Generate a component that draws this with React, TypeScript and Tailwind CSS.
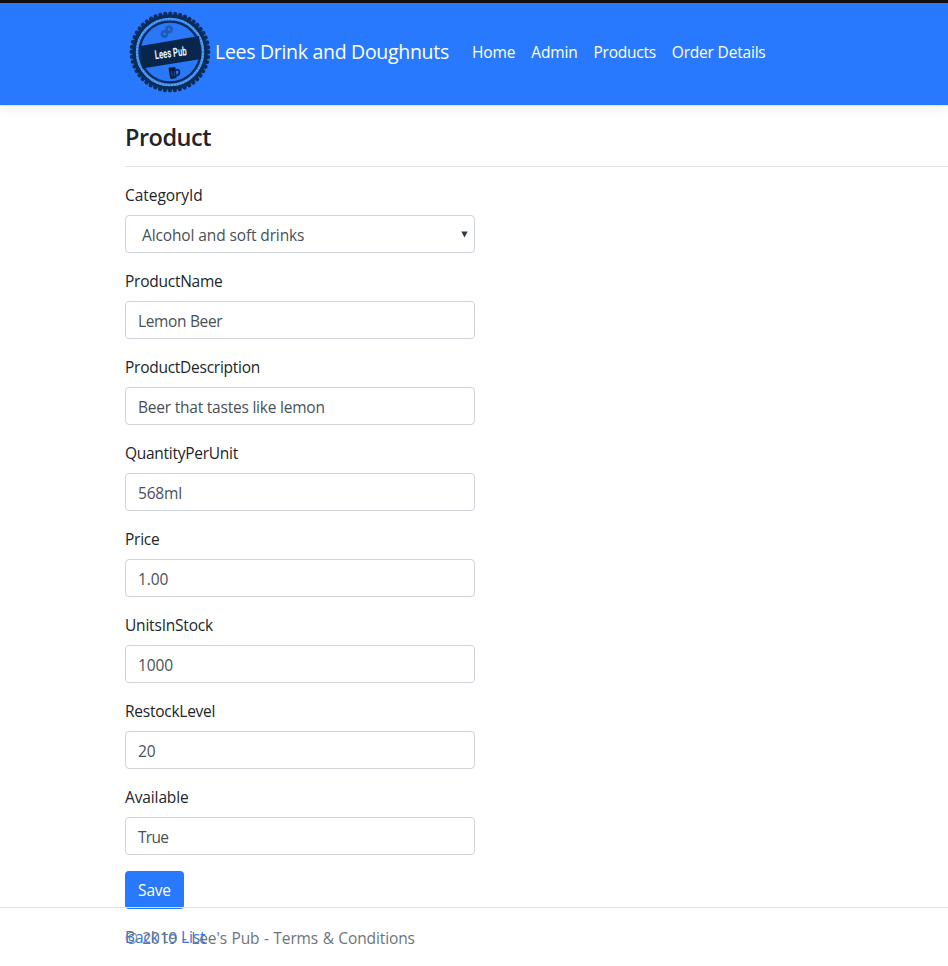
const fields = [
  { label: "ProductName", value: "Lemon Beer", ls: "tracking-[-0.25px]", vs: "tracking-[-0.35px]" },
  { label: "ProductDescription", value: "Beer that tastes like lemon", ls: "tracking-[-0.26px]", vs: "tracking-[-0.22px]" },
  { label: "QuantityPerUnit", value: "568ml", ls: "tracking-[-0.27px]", vs: "tracking-[-0.2px]" },
  { label: "Price", value: "1.00", ls: "tracking-[-0.25px]", vs: "tracking-[-0.1px]" },
  { label: "UnitsInStock", value: "1000", ls: "tracking-[-0.2px]", vs: "tracking-[-0.1px]" },
  { label: "RestockLevel", value: "20", ls: "tracking-[-0.25px]", vs: "tracking-[-0.1px]" },
  { label: "Available", value: "True", ls: "tracking-[-0.12px]", vs: "tracking-[-0.7px]" },
];

function Logo() {
  return (
    <svg className="mb-1 size-[84px] shrink-0" viewBox="0 0 84 84">
      <circle cx="42" cy="42" r="37.8" fill="#0a2c5c" />
      <circle cx="42" cy="42" r="38.4" fill="none" stroke="#0a2c5c" strokeWidth="4.2" strokeLinecap="round" strokeDasharray="0.01 5.0165" />
      <circle cx="42" cy="42" r="33.2" fill="#2a78f8" stroke="#55a5f5" strokeWidth="2" />
      <circle cx="42" cy="42" r="33.2" fill="none" stroke="#2f78d8" strokeWidth="1.4" strokeDasharray="1 2" />
      <circle cx="42" cy="42" r="30.4" fill="#2a78f8" stroke="#0a2c5c" strokeWidth="2.4" />
      <path d="M12.5 36 L71 26 L73 49 L14 58.5 Z" fill="#08254b" />
      <g fill="none" stroke="#1f5cb8" strokeWidth="2.6">
        <circle cx="41" cy="19.5" r="2.6" />
        <circle cx="36.5" cy="24" r="2.6" />
      </g>
      <text
        x="42.5"
        y="47.3"
        textAnchor="middle"
        transform="rotate(-7 42 42)"
        textLength="32"
        lengthAdjust="spacingAndGlyphs"
        fontSize="12.5"
        fontWeight="700"
        fill="#e3efff"
        fontFamily="Roboto, sans-serif"
      >
        Lees Pub
      </text>
      <path d="M40.5 58.5 q1 -2 3 -1 q2 -1.2 4 0 l1.2 10 q-3 1.8 -6.4 1.2 Z" fill="#061c3d" />
      <path d="M48 60 q3.6 -1 3.4 2.4 q-0.2 3 -3 3.2" fill="none" stroke="#061c3d" strokeWidth="1.6" />
      <path d="M43.6 61 l0.6 5.6 M46.2 61 l0.3 5.6" stroke="#2465c9" strokeWidth="0.7" />
    </svg>
  );
}

export default function App() {
  return (
    <div className="relative h-[966px] overflow-hidden bg-white font-['Open_Sans','Noto_Sans',sans-serif] text-[15.5px] leading-6 text-[#212529]">
      <div className="h-[3px] bg-[#111]" />
      <nav className="flex h-[103px] items-center border-b border-[#dbe6f8] bg-[#2979ff] bg-clip-padding pl-[128px] text-white shadow-[0_4px_12px_rgba(0,0,0,0.05)]">
        <Logo />
        <span className="mb-1 ml-[3px] w-[234px] whitespace-nowrap text-[19.5px] tracking-[-0.3px]">Lees Drink and Doughnuts</span>
        <div className="mb-1 ml-[23px] flex gap-4 whitespace-nowrap">
          <a className="tracking-[-0.12px]">Home</a>
          <a className="tracking-[-0.18px]">Admin</a>
          <a className="tracking-[-0.25px]">Products</a>
          <a className="tracking-[-0.19px]">Order Details</a>
        </div>
      </nav>
      <main className="pl-[125px] pt-[15px]">
        <h4 className="h-[29px] pt-0.5 text-[23.5px] font-semibold leading-[29px] tracking-[-0.5px]">Product</h4>
        <hr className="my-4 border-[#e5e5e5]" />
        <div className="mb-4">
          <label className="mb-2 block tracking-[-0.05px]">CategoryId</label>
          <div className="flex h-[38px] w-[350px] items-center justify-between rounded border border-[#ced4da] pl-4 pr-1.5 text-[#495057]">
            <span className="pt-0.5 tracking-[-0.12px]">Alcohol and soft drinks</span>
            <svg className="size-[7px]" viewBox="0 0 7 7">
              <path d="M0.3 0.5 H6.7 L3.5 6.5 Z" fill="#343a40" />
            </svg>
          </div>
        </div>
        {fields.map((f) => (
          <div key={f.label} className="mb-4">
            <label className={`mb-2 block ${f.ls}`}>{f.label}</label>
            <div className="flex h-[38px] w-[350px] items-center rounded border border-[#ced4da] pl-3 text-[#495057]">
              <span className={`pt-0.5 ${f.vs}`}>{f.value}</span>
            </div>
          </div>
        ))}
        <button className="mb-4 block h-[38px] w-[59px] rounded bg-[#2979ff] tracking-[-0.2px] text-white">Save</button>
        <a className="tracking-[-0.13px] text-[#2f74e8]">Back to List</a>
      </main>
      <footer className="absolute inset-x-0 top-[907px] border-t border-[#dee2e6] pl-[125px] leading-[60px] tracking-[-0.11px] text-[#6c757d] [word-spacing:0.6px]">
        © 2019 - Lee's Pub - Terms &amp; Conditions
      </footer>
    </div>
  );
}
